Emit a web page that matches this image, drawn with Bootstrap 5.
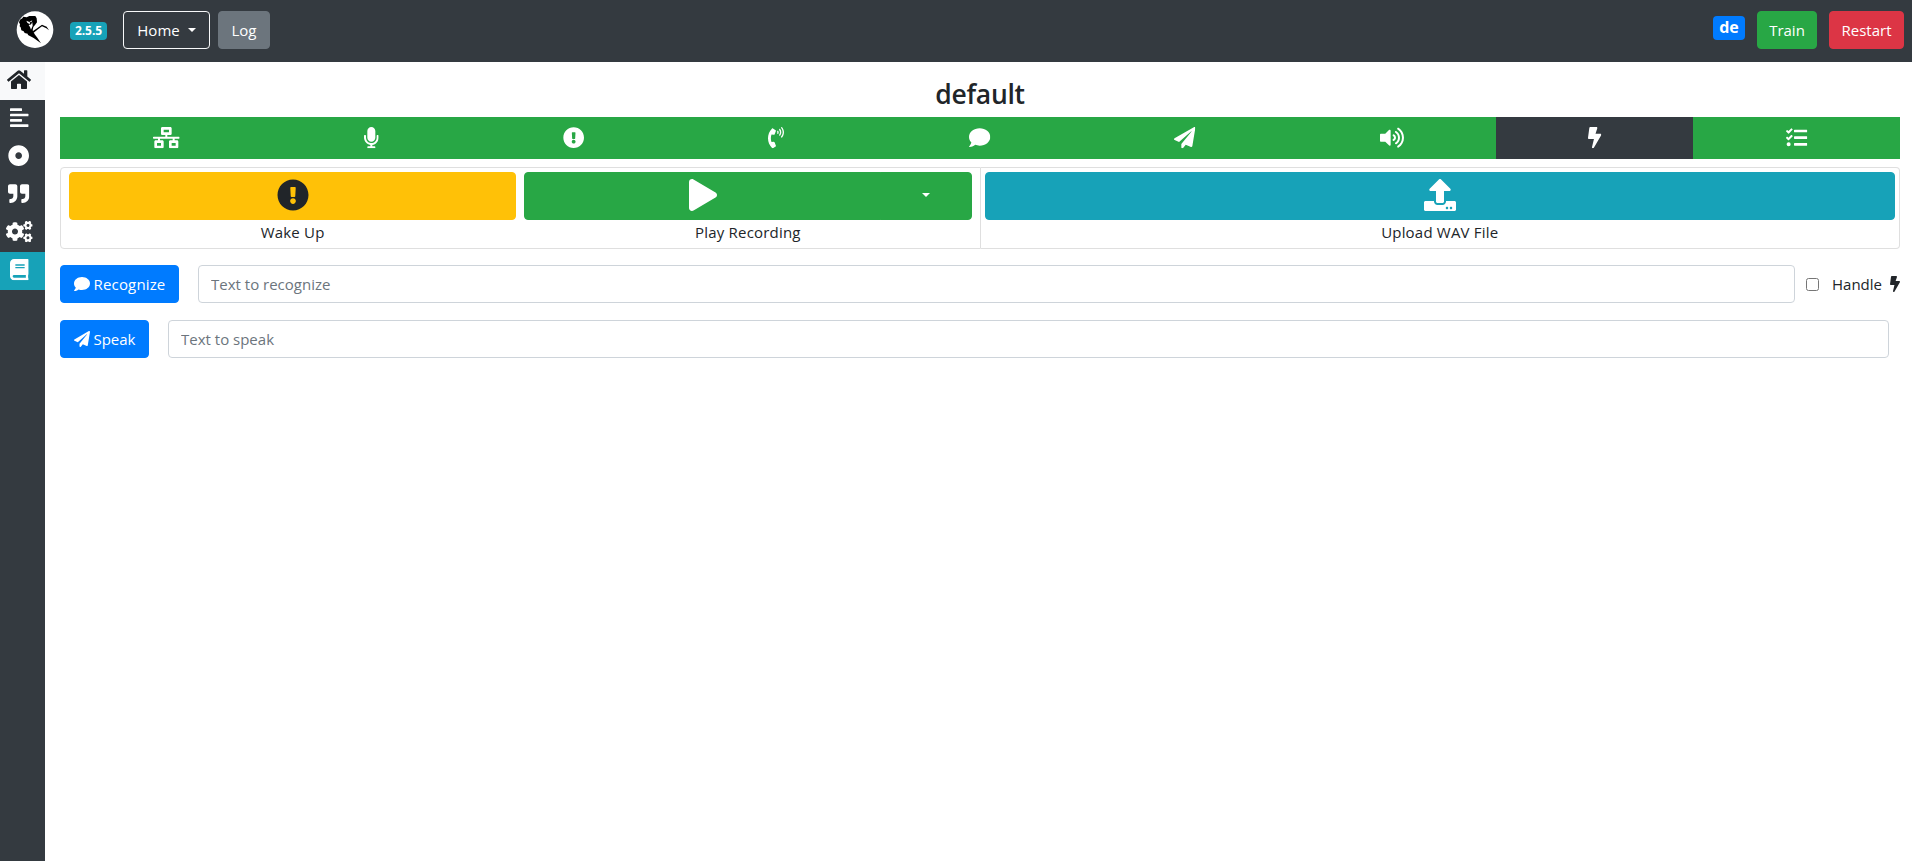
<!DOCTYPE html>
<html lang="en">
<head>
<meta charset="utf-8">
<meta name="viewport" content="width=device-width, initial-scale=1">
<title>default</title>
<link href="https://cdn.jsdelivr.net/npm/bootstrap@5.3.0/dist/css/bootstrap.min.css" rel="stylesheet">
<style>
  :root { --green: #28a745; --dark: #343a40; --teal: #17a2b8; --blue: #007bff; }
  body { font-family: "Open Sans", "Noto Sans", sans-serif; font-size: 15px; line-height: 24px; color: #212529; min-height: 100vh; }
  .fa-icon { height: 1em; width: auto; fill: currentColor; display: inline-block; vertical-align: -.125em; overflow: visible; }
  .icon-lg { font-size: 21.333px; display: block; }
  .icon-2x { font-size: 32px; display: block; }
  .btn { --bs-btn-font-size: 15px; --bs-btn-line-height: 24px; --bs-btn-border-radius: 4px; --bs-btn-color: #fff; }
  .btn-success { --bs-btn-bg: var(--green); --bs-btn-border-color: var(--green); }
  .btn-danger { --bs-btn-bg: #dc3545; --bs-btn-border-color: #dc3545; }
  .btn-primary { --bs-btn-bg: var(--blue); --bs-btn-border-color: var(--blue); }
  .btn-info { --bs-btn-bg: var(--teal); --bs-btn-border-color: var(--teal); }
  .btn-warning { --bs-btn-color: #212529; }
  .btn-dark { --bs-btn-bg: var(--dark); --bs-btn-border-color: var(--dark); }
  .topbar { height: 62px; background: var(--dark); padding: 11px 8px 13px 16px; }
  .topbar .btn { height: 38px; padding-left: 0; padding-right: 0; }
  .brand-logo { width: 38px; height: 38px; margin-right: 16px; }
  .version { width: 37px; height: 18px; background: var(--teal); font-size: 12px; line-height: 18px; padding: 0; border-radius: 4px; letter-spacing: -.1px; margin: 2px 16px 0 0; }
  .lang { width: 32px; height: 24px; background: var(--blue); font-size: 16px; line-height: 22px; padding: 0; border-radius: 4px; margin: -4px 12px 0 0; }
  .home-btn { width: 87px; } .log-btn { width: 52px; } .train-btn { width: 60px; margin-right: 12px; } .restart-btn { width: 75px; }
  .home-btn::after { font-size: 16px; margin-left: 8px; }
  .rail { width: 45px; background: var(--dark); }
  .rail a { height: 38px; color: #fff; display: flex; align-items: center; justify-content: center; padding: 0 7px 2px 0; }
  .rail a.current { background: #f8f9fa; color: #212529; }
  .rail a.docs { background: var(--teal); }
  .content { padding: 16px 12px 0 15px; }
  .content h3 { font-size: 26.5px; line-height: 33px; font-weight: 600; margin-bottom: 6px; letter-spacing: -.25px; }
  .services { height: 42px; }
  .services .btn { border-radius: 0; display: flex; justify-content: center; align-items: center; padding: 0 12px 1px; }
  .actions { margin-top: 8px; }
  .actions .card { border-color: #dfdfdf; --bs-card-border-radius: 4px; --bs-card-inner-border-radius: 3px; }
  .action-label { letter-spacing: .2px; }
  .big-btn { height: 48px; display: flex; align-items: center; justify-content: center; padding: 0 0 2px; }
  .btn-group > .btn.play-btn { flex: 0 0 357px; }
  .big-btn.dropdown-toggle-split::after { font-size: 16px; }
  .form-control { height: 38px; font-size: 15px; line-height: 24px; border-color: #ced4da; border-radius: 4px; }
  .form-control::placeholder { color: #6c757d; }
  .handle-box { width: 13px; height: 13px; margin: 0 13px 0 11px; }
  .handle-text { width: 58px; }
  .recognize-btn, .speak-btn { padding-left: 0; padding-right: 0; flex: none; margin-right: 19px; }
  .recognize-btn { width: 119px; letter-spacing: .15px; }
  .speak-btn { width: 89px; }
  .speak-row { margin: 17px 11px 0 0; }
  .recognize-btn .fa-icon, .speak-btn .fa-icon, .handle-bolt { font-size: 16px; }
</style>
</head>
<body class="d-flex flex-column">
<svg class="d-none" aria-hidden="true">
  <symbol id="home" viewBox="0 0 576 512"><path d="M280.37 148.26L96 300.11V464a16 16 0 0 0 16 16l112.06-.29a16 16 0 0 0 15.92-16V368a16 16 0 0 1 16-16h64a16 16 0 0 1 16 16v95.64a16 16 0 0 0 16 16.05L464 480a16 16 0 0 0 16-16V300L295.67 148.26a12.19 12.19 0 0 0-15.3 0zM571.6 251.47L488 182.56V44.05a12 12 0 0 0-12-12h-56a12 12 0 0 0-12 12v72.61L318.47 43a48 48 0 0 0-61 0L4.34 251.47a12 12 0 0 0-1.6 16.9l25.5 31A12 12 0 0 0 45.15 301l235.22-193.74a12.19 12.19 0 0 1 15.3 0L530.9 301a12 12 0 0 0 16.9-1.6l25.5-31a12 12 0 0 0-1.7-16.93z"/></symbol>
  <symbol id="left" viewBox="0 0 448 512"><rect y="32" width="288" height="64" rx="13"/><rect y="160" width="448" height="64" rx="16"/><rect y="288" width="288" height="64" rx="13"/><rect y="416" width="448" height="64" rx="16"/></symbol>
  <symbol id="dot" viewBox="0 0 512 512"><path d="M256 8C119.033 8 8 119.033 8 256s111.033 248 248 248 248-111.033 248-248S392.967 8 256 8zm80 248c0 44.112-35.888 80-80 80s-80-35.888-80-80 35.888-80 80-80 80 35.888 80 80z"/></symbol>
  <symbol id="quote" viewBox="0 0 512 512"><path d="M464 32H336c-26.5 0-48 21.5-48 48v128c0 26.5 21.5 48 48 48h80v64c0 35.3-28.7 64-64 64h-8c-13.3 0-24 10.7-24 24v48c0 13.3 10.7 24 24 24h8c88.4 0 160-71.6 160-160V80c0-26.5-21.5-48-48-48zm-288 0H48C21.5 32 0 53.5 0 80v128c0 26.5 21.5 48 48 48h80v64c0 35.3-28.7 64-64 64h-8c-13.3 0-24 10.7-24 24v48c0 13.3 10.7 24 24 24h8c88.4 0 160-71.6 160-160V80c0-26.5-21.5-48-48-48z"/></symbol>
  <symbol id="cogs" viewBox="0 0 640 512"><path id="cog-small" d="M512.1 191l-8.2 14.3c-3 5.3-9.4 7.5-15.1 5.4-11.8-4.4-22.6-10.7-32.1-18.6-4.6-3.8-5.8-10.5-2.8-15.7l8.2-14.3c-6.9-8-12.3-17.3-15.9-27.4h-16.5c-6 0-11.2-4.3-12.2-10.3-2-12-2.1-24.6 0-37.1 1-6 6.2-10.4 12.2-10.4h16.5c3.6-10.1 9-19.4 15.9-27.4l-8.2-14.3c-3-5.2-1.9-11.9 2.8-15.7 9.5-7.9 20.4-14.2 32.1-18.6 5.7-2.1 12.1.1 15.1 5.4l8.2 14.3c10.5-1.9 21.2-1.9 31.7 0L552 6.3c3-5.3 9.4-7.5 15.1-5.4 11.8 4.4 22.6 10.7 32.1 18.6 4.6 3.8 5.8 10.5 2.8 15.7l-8.2 14.3c6.9 8 12.3 17.3 15.9 27.4h16.5c6 0 11.2 4.3 12.2 10.3 2 12 2.1 24.6 0 37.1-1 6-6.2 10.4-12.2 10.4h-16.5c-3.6 10.1-9 19.4-15.9 27.4l8.2 14.3c3 5.2 1.9 11.9-2.8 15.7-9.5 7.9-20.4 14.2-32.1 18.6-5.7 2.1-12.1-.1-15.1-5.4l-8.2-14.3c-10.4 1.9-21.2 1.9-31.7 0zm-10.5-58.8c38.5 29.6 82.4-14.3 52.8-52.8-38.5-29.7-82.4 14.3-52.8 52.8z"/><use href="#cog-small" y="299"/><path d="M386.3 286.1l33.7 16.8c10.1 5.8 14.5 18.1 10.5 29.1-8.9 24.2-26.4 46.4-42.6 65.8-7.4 8.9-20.2 11.1-30.3 5.3l-29.1-16.8c-16 13.7-34.6 24.6-54.9 31.7v33.6c0 11.6-8.3 21.6-19.7 23.6-24.6 4.2-50.4 4.4-75.9 0-11.5-2-20-11.9-20-23.6V418c-20.3-7.2-38.9-18-54.9-31.7L74 403c-10 5.8-22.9 3.6-30.3-5.3-16.2-19.4-33.3-41.6-42.2-65.7-4-10.9.4-23.2 10.5-29.1l33.3-16.8c-3.9-20.9-3.9-42.4 0-63.4L12 205.8c-10.1-5.8-14.6-18.1-10.5-29 8.9-24.2 26-46.4 42.2-65.8 7.4-8.9 20.2-11.1 30.3-5.3l29.1 16.8c16-13.7 34.6-24.6 54.9-31.7V57.1c0-11.5 8.2-21.5 19.6-23.5 24.6-4.2 50.5-4.4 76-.1 11.5 2 20 11.9 20 23.6v33.6c20.3 7.2 38.9 18 54.9 31.7l29.1-16.8c10-5.8 22.9-3.6 30.3 5.3 16.2 19.4 33.2 41.6 42.1 65.8 4 10.9.1 23.2-10 29.1l-33.7 16.8c3.9 21 3.9 42.5 0 63.5zm-117.6 21.1c59.2-77-28.7-164.9-105.7-105.7-59.2 77 28.7 164.9 105.7 105.7z"/></symbol>
  <symbol id="book" viewBox="0 0 448 512"><path d="M448 360V24c0-13.3-10.7-24-24-24H96C43 0 0 43 0 96v320c0 53 43 96 96 96h328c13.3 0 24-10.7 24-24v-16c0-7.5-3.5-14.3-8.9-18.7-4.2-15.4-4.2-59.3 0-74.7 5.4-4.3 8.9-11.1 8.9-18.6zM128 134c0-3.3 2.7-6 6-6h212c3.3 0 6 2.7 6 6v20c0 3.3-2.7 6-6 6H134c-3.3 0-6-2.7-6-6v-20zm0 64c0-3.3 2.7-6 6-6h212c3.3 0 6 2.7 6 6v20c0 3.3-2.7 6-6 6H134c-3.3 0-6-2.7-6-6v-20zm253.4 250H96c-17.7 0-32-14.3-32-32 0-17.6 14.4-32 32-32h285.4c-1.9 17.1-1.9 46.9 0 64z"/></symbol>
  <symbol id="network" viewBox="0 0 640 512"><path d="M640 264v-16c0-8.84-7.16-16-16-16H344v-40h72c17.67 0 32-14.33 32-32V32c0-17.67-14.33-32-32-32H224c-17.67 0-32 14.33-32 32v128c0 17.67 14.33 32 32 32h72v40H16c-8.84 0-16 7.16-16 16v16c0 8.84 7.16 16 16 16h104v40H64c-17.67 0-32 14.33-32 32v128c0 17.67 14.33 32 32 32h160c17.67 0 32-14.33 32-32V352c0-17.67-14.33-32-32-32h-56v-40h304v40h-56c-17.67 0-32 14.33-32 32v128c0 17.67 14.33 32 32 32h160c17.67 0 32-14.33 32-32V352c0-17.67-14.33-32-32-32h-56v-40h104c8.84 0 16-7.16 16-16zM256 128V64h128v64H256zm-64 320H96v-64h96v64zm352 0h-96v-64h96v64z"/></symbol>
  <symbol id="mic" viewBox="0 0 352 512"><path d="M176 352c53.02 0 96-42.98 96-96V96c0-53.02-42.98-96-96-96S80 42.98 80 96v160c0 53.02 42.98 96 96 96zm160-160h-16c-8.84 0-16 7.16-16 16v48c0 74.8-64.49 134.82-140.79 127.38C96.71 376.89 48 317.11 48 250.3V208c0-8.84-7.16-16-16-16H16c-8.84 0-16 7.16-16 16v40.16c0 89.64 63.97 169.55 152 181.69V464H96c-8.84 0-16 7.16-16 16v16c0 8.84 7.16 16 16 16h160c8.84 0 16-7.16 16-16v-16c0-8.84-7.16-16-16-16h-56v-33.77C285.71 418.47 352 344.9 352 256v-48c0-8.84-7.16-16-16-16z"/></symbol>
  <symbol id="exclaim" viewBox="0 0 512 512"><path d="M504 256c0 136.997-111.043 248-248 248S8 392.997 8 256C8 119.083 119.043 8 256 8s248 111.083 248 248zm-248 50c-25.405 0-46 20.595-46 46s20.595 46 46 46 46-20.595 46-46-20.595-46-46-46zm-43.673-165.346l7.418 136c.347 6.364 5.609 11.346 11.982 11.346h48.546c6.373 0 11.635-4.982 11.982-11.346l7.418-136c.375-6.874-5.098-12.654-11.982-12.654h-63.383c-6.884 0-12.356 5.78-11.981 12.654z"/></symbol>
  <symbol id="phone" viewBox="0 0 384 512"><path d="M97.333 506.966c-129.874-129.874-129.681-340.252 0-469.933 5.698-5.698 14.527-6.632 21.263-2.422l64.817 40.513a17.187 17.187 0 0 1 6.849 20.958l-32.408 81.021a17.188 17.188 0 0 1-17.669 10.719l-55.81-5.58c-21.051 58.261-20.612 122.471 0 179.515l55.811-5.581a17.188 17.188 0 0 1 17.669 10.719l32.408 81.022a17.188 17.188 0 0 1-6.849 20.958l-64.817 40.513a17.19 17.19 0 0 1-21.264-2.422zM247.126 95.473c11.832 20.047 11.832 45.008 0 65.055-3.95 6.693-13.108 7.959-18.718 2.581l-5.975-5.726c-3.911-3.748-4.793-9.622-2.261-14.41a32.063 32.063 0 0 0 0-29.945c-2.533-4.788-1.65-10.662 2.261-14.41l5.975-5.726c5.61-5.378 14.768-4.112 18.718 2.581zm91.787-91.187c60.14 71.604 60.092 175.882 0 247.428-4.474 5.327-12.53 5.746-17.552.933l-5.798-5.557c-4.56-4.371-4.977-11.529-.93-16.379 49.687-59.538 49.646-145.933 0-205.422-4.047-4.85-3.631-12.008.93-16.379l5.798-5.557c5.022-4.813 13.078-4.394 17.552.933zm-45.972 44.941c36.05 46.322 36.108 111.149 0 157.546-4.39 5.641-12.697 6.251-17.856 1.304l-5.818-5.579c-4.4-4.219-4.998-11.095-1.285-15.931 26.536-34.564 26.534-82.572 0-117.134-3.713-4.836-3.115-11.711 1.285-15.931l5.818-5.579c5.159-4.947 13.466-4.337 17.856 1.304z"/></symbol>
  <symbol id="comment" viewBox="0 0 512 512"><path d="M256 32C114.6 32 0 125.1 0 240c0 49.6 21.4 95 57 130.7C44.5 421.1 2.7 466 2.2 466.5c-2.2 2.3-2.8 5.7-1.5 8.7S4.8 480 8 480c66.3 0 116-31.8 140.6-51.4 32.7 12.3 69 19.4 107.4 19.4 141.4 0 256-93.1 256-208S397.4 32 256 32z"/></symbol>
  <symbol id="plane" viewBox="0 0 512 512"><path d="M476 3.2L12.5 270.6c-18.1 10.4-15.8 35.6 2.2 43.2L121 358.4l287.3-253.2c5.5-4.9 13.3 2.6 8.6 8.3L176 407v80.5c0 23.6 28.5 32.9 42.5 15.8L282 426l124.6 52.2c14.2 6 30.4-2.9 33-18.2l72-432C515 7.8 493.3-6.8 476 3.2z"/></symbol>
  <symbol id="volume" viewBox="0 0 576 512"><path d="M215.03 71.05L126.06 160H24c-13.26 0-24 10.74-24 24v144c0 13.25 10.74 24 24 24h102.06l88.97 88.95c15.03 15.03 40.97 4.47 40.97-16.97V88.02c0-21.46-25.96-31.98-40.97-16.97zm233.32-51.08c-11.17-7.33-26.18-4.24-33.51 6.95-7.34 11.17-4.22 26.18 6.95 33.51 66.27 43.49 105.82 116.6 105.82 195.58 0 78.98-39.55 152.09-105.82 195.58-11.17 7.32-14.29 22.34-6.95 33.5 7.04 10.71 21.93 14.56 33.51 6.95C528.27 439.58 576 351.33 576 256S528.27 72.43 448.35 19.97zM480 256c0-63.53-32.06-121.94-85.77-156.24-11.19-7.14-26.03-3.82-33.12 7.46s-3.78 26.21 7.41 33.36C408.27 165.97 432 209.11 432 256s-23.73 90.02-63.48 115.42c-11.19 7.14-14.5 22.07-7.41 33.36 6.51 10.36 21.12 15.14 33.12 7.46C447.94 377.94 480 319.54 480 256zm-141.77-76.87c-11.58-6.33-26.19-2.16-32.61 9.45-6.39 11.61-2.16 26.2 9.45 32.61C327.98 228.28 336 241.63 336 256c0 14.38-8.02 27.72-20.92 34.81-11.61 6.41-15.84 21-9.45 32.61 6.43 11.66 21.05 15.8 32.61 9.45 28.23-15.55 45.77-45 45.77-76.88s-17.54-61.32-45.78-76.86z"/></symbol>
  <symbol id="bolt" viewBox="0 0 320 512"><path d="M296 160H180.6l42.6-129.8C227.2 15 215.7 0 200 0H56C44 0 33.8 8.9 32.2 20.8l-32 240C-1.7 275.2 9.5 288 24 288h118.7L96.6 482.5c-3.6 15.2 8 29.5 23.3 29.5 8.4 0 16.4-4.4 20.8-12l176-304c9.3-15.9-2.2-36-20.7-36z"/></symbol>
  <symbol id="tasks" viewBox="0 0 512 512"><path d="M139.61 35.5a12 12 0 0 0-17 0L58.93 98.81l-22.7-22.12a12 12 0 0 0-17 0L3.53 92.41a12 12 0 0 0 0 17l47.59 47.4a12.78 12.78 0 0 0 17.61 0l15.59-15.62L156.52 69a12.09 12.09 0 0 0 .09-17zm0 159.19a12 12 0 0 0-17 0l-63.68 63.72-22.7-22.1a12 12 0 0 0-17 0L3.53 252a12 12 0 0 0 0 17L51 316.5a12.77 12.77 0 0 0 17.6 0l15.7-15.69 72.2-72.22a12 12 0 0 0 .09-16.9zM64 368c-26.49 0-48.59 21.5-48.59 48S37.53 464 64 464a48 48 0 0 0 0-96zm432 16H208a16 16 0 0 0-16 16v32a16 16 0 0 0 16 16h288a16 16 0 0 0 16-16v-32a16 16 0 0 0-16-16zm0-320H208a16 16 0 0 0-16 16v32a16 16 0 0 0 16 16h288a16 16 0 0 0 16-16V80a16 16 0 0 0-16-16zm0 160H208a16 16 0 0 0-16 16v32a16 16 0 0 0 16 16h288a16 16 0 0 0 16-16v-32a16 16 0 0 0-16-16z"/></symbol>
  <symbol id="play" viewBox="0 0 448 512"><path d="M424.4 214.7L72.4 6.6C43.8-10.3 0 6.1 0 47.9V464c0 37.5 40.7 60.1 72.4 41.3l352-208c31.4-18.5 31.5-64.1 0-82.6z"/></symbol>
  <symbol id="upload" viewBox="0 0 512 512"><path d="M296 384h-80c-13.3 0-24-10.7-24-24V192h-87.7c-17.8 0-26.7-21.5-14.1-34.1L242.3 5.7c7.5-7.5 19.8-7.5 27.3 0l152.2 152.2c12.6 12.6 3.7 34.1-14.1 34.1H320v168c0 13.3-10.7 24-24 24zm216-8v112c0 13.3-10.7 24-24 24H24c-13.3 0-24-10.7-24-24V376c0-13.3 10.7-24 24-24h136v8c0 30.9 25.1 56 56 56h80c30.9 0 56-25.1 56-56v-8h136c13.3 0 24 10.7 24 24zm-124 88c0-11-9-20-20-20s-20 9-20 20 9 20 20 20 20-9 20-20zm64 0c0-11-9-20-20-20s-20 9-20 20 9 20 20 20 20-9 20-20z"/></symbol>
</svg>

<nav class="topbar d-flex align-items-center flex-shrink-0">
  <svg class="brand-logo" viewBox="0 0 114 114" role="img" aria-label="logo">
    <circle cx="57" cy="56" r="55" fill="#fff"/>
    <path d="M9 34l3-8 7-4 3-5 10 2 8-4 18 0 4 7 1 12-6 8-5 6-2 10 6 12 8 10 11 17-22-16-17-9-1-4-9-2-3-5-7-3-2-9-3-3 1-6z"/>
    <path d="M50 61l10-7 18-13 14 6 7 11-8-6-13-6-14 10-11 9z"/>
    <path d="M31 29l9 4 9-5-3 6-6 5-6-4zM38 42l7-2 4-6 1 10-5 12-3-8z" fill="#fff"/>
    <path d="M41 34l3 8 2-9z"/>
  </svg>
  <span class="badge version">2.5.5</span>
  <button class="btn btn-outline-light home-btn dropdown-toggle me-2" type="button">Home</button>
  <button class="btn btn-secondary log-btn" type="button">Log</button>
  <span class="badge lang ms-auto">de</span>
  <button class="btn btn-success train-btn" type="button">Train</button>
  <button class="btn btn-danger restart-btn" type="button">Restart</button>
</nav>

<div class="d-flex flex-grow-1">
  <aside class="rail flex-shrink-0">
    <a class="current" href="#"><svg class="fa-icon icon-lg" viewBox="0 0 576 512"><use href="#home"/></svg></a>
    <a href="#"><svg class="fa-icon icon-lg" viewBox="0 0 448 512"><use href="#left"/></svg></a>
    <a href="#"><svg class="fa-icon icon-lg" viewBox="0 0 512 512"><use href="#dot"/></svg></a>
    <a href="#"><svg class="fa-icon icon-lg" viewBox="0 0 512 512"><use href="#quote"/></svg></a>
    <a href="#"><svg class="fa-icon icon-lg" viewBox="0 0 640 512"><use href="#cogs"/></svg></a>
    <a class="docs" href="#"><svg class="fa-icon icon-lg" viewBox="0 0 448 512"><use href="#book"/></svg></a>
  </aside>
  <main class="content flex-grow-1">
    <h3 class="text-center">default</h3>
    <div class="btn-group services d-flex">
      <button class="btn btn-success" type="button"><svg class="fa-icon icon-lg" viewBox="0 0 640 512"><use href="#network"/></svg></button>
      <button class="btn btn-success" type="button"><svg class="fa-icon icon-lg" viewBox="0 0 352 512"><use href="#mic"/></svg></button>
      <button class="btn btn-success" type="button"><svg class="fa-icon icon-lg" viewBox="0 0 512 512"><use href="#exclaim"/></svg></button>
      <button class="btn btn-success" type="button"><svg class="fa-icon icon-lg" viewBox="0 0 384 512"><use href="#phone"/></svg></button>
      <button class="btn btn-success" type="button"><svg class="fa-icon icon-lg" viewBox="0 0 512 512"><use href="#comment"/></svg></button>
      <button class="btn btn-success" type="button"><svg class="fa-icon icon-lg" viewBox="0 0 512 512"><use href="#plane"/></svg></button>
      <button class="btn btn-success" type="button"><svg class="fa-icon icon-lg" viewBox="0 0 576 512"><use href="#volume"/></svg></button>
      <button class="btn btn-dark" type="button"><svg class="fa-icon icon-lg" viewBox="0 0 320 512"><use href="#bolt"/></svg></button>
      <button class="btn btn-success" type="button"><svg class="fa-icon icon-lg" viewBox="0 0 512 512"><use href="#tasks"/></svg></button>
    </div>

    <div class="card-group actions">
      <div class="card">
        <div class="card-body p-1">
          <div class="row gx-2 mx-0 text-center">
            <div class="col">
              <button class="btn btn-warning big-btn w-100" type="button"><svg class="fa-icon icon-2x" viewBox="0 0 512 512"><use href="#exclaim"/></svg></button>
              <div class="action-label">Wake Up</div>
            </div>
            <div class="col">
              <div class="btn-group d-flex">
                <button class="btn btn-success big-btn play-btn" type="button"><svg class="fa-icon icon-2x" viewBox="0 0 448 512"><use href="#play"/></svg></button>
                <button class="btn btn-success big-btn dropdown-toggle dropdown-toggle-split" type="button" aria-label="Recordings"></button>
              </div>
              <div class="action-label">Play Recording</div>
            </div>
          </div>
        </div>
      </div>
      <div class="card">
        <div class="card-body p-1 text-center">
          <button class="btn btn-info big-btn w-100" type="button"><svg class="fa-icon icon-2x" viewBox="0 0 512 512"><use href="#upload"/></svg></button>
          <div class="action-label">Upload WAV File</div>
        </div>
      </div>
    </div>

    <form class="d-flex align-items-center mt-3">
      <button class="btn btn-primary recognize-btn" type="button"><svg class="fa-icon" viewBox="0 0 512 512"><use href="#comment"/></svg> Recognize</button>
      <input class="form-control" type="text" placeholder="Text to recognize">
      <input class="handle-box flex-shrink-0" type="checkbox" id="handle">
      <label class="d-flex align-items-center" for="handle"><span class="handle-text">Handle</span><svg class="fa-icon handle-bolt" viewBox="0 0 320 512"><use href="#bolt"/></svg></label>
    </form>
    <form class="d-flex align-items-center speak-row">
      <button class="btn btn-primary speak-btn" type="button"><svg class="fa-icon" viewBox="0 0 512 512"><use href="#plane"/></svg> Speak</button>
      <input class="form-control" type="text" placeholder="Text to speak">
    </form>
  </main>
</div>
<script src="https://cdn.jsdelivr.net/npm/bootstrap@5.3.0/dist/js/bootstrap.bundle.min.js"></script>
</body>
</html>
